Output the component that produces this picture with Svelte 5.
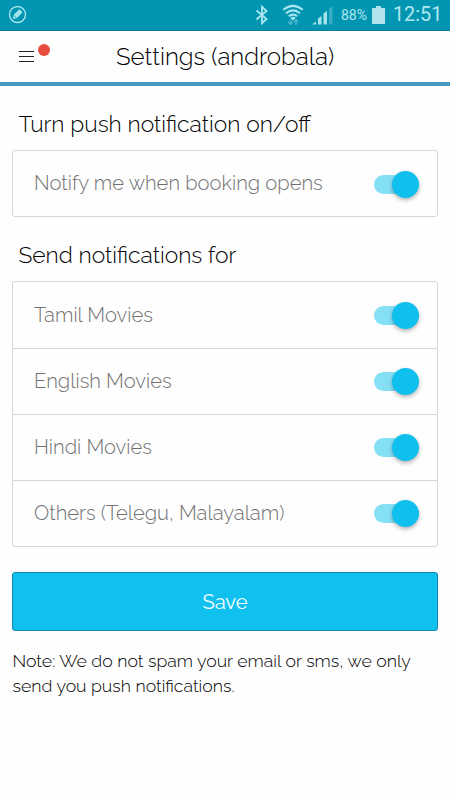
<script lang="ts">
  type Option = { id: string; label: string; on: boolean };

  let master = $state<Option[]>([
    { id: 'booking', label: 'Notify me when booking opens', on: true },
  ]);
  let languages = $state<Option[]>([
    { id: 'tamil', label: 'Tamil Movies', on: true },
    { id: 'english', label: 'English Movies', on: true },
    { id: 'hindi', label: 'Hindi Movies', on: true },
    { id: 'others', label: 'Others (Telegu, Malayalam)', on: true },
  ]);
</script>

{#snippet card(options: Option[])}
  <ul class="card">
    {#each options as o (o.id)}
      <li>
        <span class="lbl">{o.label}</span>
        <button
          class="switch"
          class:on={o.on}
          role="switch"
          aria-checked={o.on}
          aria-label={o.label}
          onclick={() => (o.on = !o.on)}
        ><span class="knob"></span></button>
      </li>
    {/each}
  </ul>
{/snippet}

<div class="screen">
  <div class="status">
    <svg class="edit" width="19" height="19" viewBox="0 0 19 19" aria-hidden="true">
      <circle cx="9.5" cy="9.5" r="8" fill="none" stroke="#a5e4ed" stroke-width="1.4" />
      <path d="M5 14l.5-4 5.2-5.2q.8-.6 1.5 0l1.7 1.7q.6.8 0 1.5L8.800 13.200z" fill="#a5e4ed" />
      <path d="M5.800 10.300l2.800 2.800" stroke="#0295b1" stroke-width=".8" />
    </svg>
    <svg width="14" height="20" viewBox="0 0 14 20" aria-hidden="true">
      <path d="M1.500 5.500L11.500 14 7 18.200V1.800L11.500 6l-10 8.500" fill="none" stroke="#a5e4ed" stroke-width="1.900" />
    </svg>
    <svg class="wifi" width="22" height="22" viewBox="0 0 22 22" aria-hidden="true">
      <g fill="none" stroke="#a5e4ed" stroke-width="2.100">
        <path d="M1.200 5.800q9.800-8 19.600 0M4 9.200q7-5.600 14 0M6.800 12.300q4.200-3.400 8.400 0" />
      </g>
      <path d="M8.500 15.500v5M6.300 18l2.200 2.400 2.200-2.400M14 21v-5M11.800 18l2.200-2.400 2.200 2.400" fill="none" stroke="#45b4c8" stroke-width="1.500" />
      <path d="M8.200 13.700q2.800-2 5.600 0l-2.800 2.700z" fill="#a5e4ed" />
    </svg>
    <svg class="signal" width="22" height="20" viewBox="0 0 22 20" aria-hidden="true">
      <path d="M0 19.500l4-3v3zM6 19.500v-6l3.500-2.500v8.500zM11.500 19.500V8.500L15 6v13.500z" fill="#a5e4ed" />
      <path d="M17 19.500V4l3.500-3v18.500z" fill="#38adc3" />
    </svg>
    <span class="pct">88%</span>
    <svg class="battery" width="13" height="18" viewBox="0 0 13 18" aria-hidden="true">
      <path d="M4 0h5v2h4v16H0V2h4z" fill="#b0e3ea" />
    </svg>
    <span class="clock">12:51</span>
  </div>

  <header>
    <button class="menu" aria-label="Menu">
      <svg width="16" height="12" viewBox="0 0 16 12" shape-rendering="crispEdges" aria-hidden="true">
        <path d="M0 .5h15M0 5.500h15M0 10.500h15" stroke="#222" stroke-width="1" />
      </svg>
      <span class="dot"></span>
    </button>
    <h1>Settings (androbala)</h1>
  </header>

  <main>
    <h2 class="first">Turn push notification on/off</h2>
    {@render card(master)}
    <h2 class="second">Send notifications for</h2>
    {@render card(languages)}
    <button class="save">Save</button>
    <p>Note: We do not spam your email or sms, we only<br />send you push notifications.</p>
  </main>
</div>

<style>
  :global(body) { margin: 0; background: #fefefe; }
  .screen { width: 450px; height: 800px; overflow: hidden; background: #fefefe; color: #000;
            font-family: Raleway, Lato, sans-serif; font-weight: 300; }
  .screen * { box-sizing: border-box; }
  button { border: 0; padding: 0; font: inherit; cursor: pointer; }

  .status { display: flex; align-items: center; height: 31px; padding: 0 8px 1px;
            background: #0295b1; border-bottom: 1px solid #087f96; color: #b0e8f0;
            font-family: Roboto, sans-serif; font-weight: 400; }
  .status svg { flex: none; }
  .edit { margin-right: auto; }
  .wifi { margin-left: 13px; }
  .signal { margin-left: 8px; }
  .pct { width: 28px; margin-left: 7px; font-size: 14px; }
  .battery { margin-left: 3px; }
  .clock { width: 49px; margin-left: 8px; font-size: 19.800px; white-space: nowrap; }

  header { display: grid; grid-template-columns: 1fr auto 1fr; align-items: center;
           height: 55px; border-bottom: 4px solid #4798c2; }
  .menu { position: relative; width: 32px; height: 26px; margin-left: 19px; background: none;
          display: flex; align-items: center; }
  .menu svg { margin-top: 1px; }
  .dot { position: absolute; left: 18.500px; top: 0; width: 12px; height: 12px;
         border-radius: 50%; background: #e74c3c; }
  h1 { margin: 0; font-size: 24.100px; font-weight: 300; line-height: 30px; }

  main { padding: 0 12px; }
  h2 { margin: 0; padding-left: 6.500px; font-size: 22.800px; font-weight: 300; line-height: 30px; }
  .first { padding-top: 23px; height: 64px; }
  .second { padding-top: 23px; height: 64px; }

  .card { list-style: none; margin: 0; padding: 0; border: 1px solid #d6d6d6; border-radius: 3px; width: 426px; }
  .card li { display: flex; align-items: center; justify-content: space-between;
             height: 66px; padding: 1px 18px 0 21px; }
  .card li:only-child { height: 65px; }
  .card li + li { border-top: 1px solid #d6d6d6; padding-top: 0; }
  .lbl { padding-bottom: 2px; color: #707070; font-size: 20.200px; line-height: 26px; white-space: nowrap; }

  .switch { display: flex; align-items: center; width: 45px; height: 19px; border-radius: 10px; background: #ccc; }
  .switch.on { justify-content: flex-end; background: #86e0f5; }
  .knob { width: 27px; height: 27px; flex: none; border-radius: 50%; background: #fafafa;
          box-shadow: 0 2px 4px rgba(0, 0, 0, 0.3); }
  .on .knob { background: #0fbfed; }

  .save { display: block; width: 426px; height: 59px; margin-top: 25px; border: 1px solid #1687ab;
          border-radius: 3px; background: #10c0ef; color: #f4fdff; font-size: 20.200px; font-weight: 400; }
  p { margin: 17px 0 0 0.500px; font-size: 17.700px; line-height: 25px; white-space: nowrap; }
</style>
